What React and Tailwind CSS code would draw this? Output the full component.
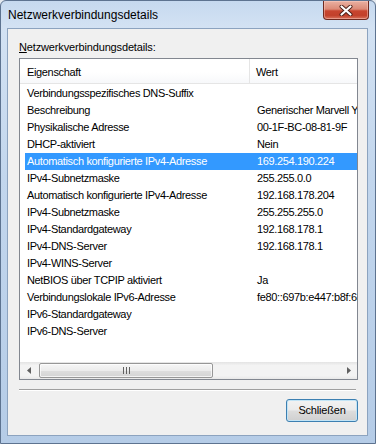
import React from "react";

const rows = [
  ["Verbindungsspezifisches DNS-Suffix", ""],
  ["Beschreibung", "Generischer Marvell Yukon 88E8056 PCI-E Gigabit Ethernet Controller"],
  ["Physikalische Adresse", "00-1F-BC-08-81-9F"],
  ["DHCP-aktiviert", "Nein"],
  ["Automatisch konfigurierte IPv4-Adresse", "169.254.190.224", true],
  ["IPv4-Subnetzmaske", "255.255.0.0"],
  ["Automatisch konfigurierte IPv4-Adresse", "192.168.178.204"],
  ["IPv4-Subnetzmaske", "255.255.255.0"],
  ["IPv4-Standardgateway", "192.168.178.1"],
  ["IPv4-DNS-Server", "192.168.178.1"],
  ["IPv4-WINS-Server", ""],
  ["NetBIOS über TCPIP aktiviert", "Ja"],
  ["Verbindungslokale IPv6-Adresse", "fe80::697b:e447:b8f:6a2c%11"],
  ["IPv6-Standardgateway", ""],
  ["IPv6-DNS-Server", ""],
];

export default function App() {
  return (
    <div
      className="w-[376px] h-[444px] bg-[#e4e9ef] overflow-hidden"
      style={{ fontFamily: '"Liberation Sans", Arial, sans-serif' }}
    >
      <div className="h-full rounded-t-[6px] border border-[#5d7390] bg-[linear-gradient(to_bottom,#c6d9ef_0%,#d3e2f3_6%,#c2d6ed_40%,#b5cce7_100%)] flex flex-col">
        {/* title bar */}
        <div className="h-[27px] flex shrink-0">
          <div className="pl-[7px] pt-[6px] text-[12px] leading-[16px] text-black">
            Netzwerkverbindungsdetails
          </div>
          <div className="ml-auto mr-[6px] w-[46px] h-[19px] rounded-b-[4px] border border-t-0 border-[#6f2a20] bg-[linear-gradient(to_bottom,#eab1a2_0%,#dc8a77_45%,#c8452f_55%,#c2412b_80%,#d9735d_100%)] shadow-[inset_0_0_0_1px_rgba(255,210,200,0.45)] flex items-center justify-center">
            <svg width="14" height="11" viewBox="0 0 14 11">
              <path d="M2.5 1.5 L11.5 9.5 M11.5 1.5 L2.5 9.5" stroke="#4a1d15" strokeWidth="4" strokeLinecap="round" fill="none" />
              <path d="M2.5 1.5 L11.5 9.5 M11.5 1.5 L2.5 9.5" stroke="#ffffff" strokeWidth="2.2" strokeLinecap="round" fill="none" />
            </svg>
          </div>
        </div>

        {/* client area */}
        <div className="flex-1 ml-[6px] mr-[7px] mb-[7px] border border-[#8ca3bf] bg-[#f0f0f0] flex flex-col pt-[11px]">
          <div className="ml-[11px] h-[15px] leading-[15px] text-[11px] tracking-[-0.15px] text-black">
            <span className="underline">N</span>etzwerkverbindungsdetails:
          </div>

          {/* list view */}
          <div className="mt-[3px] ml-[11px] w-[339px] h-[322px] border border-[#828790] bg-white flex flex-col overflow-hidden shrink-0">
            <div className="h-[25px] shrink-0 flex border-b border-[#e5e5e5] bg-[linear-gradient(to_bottom,#ffffff_0%,#ffffff_55%,#f7f8fa_100%)] text-[11px] tracking-[-0.35px] text-black">
              <div className="w-[230px] shrink-0 pl-[7px] flex items-center pt-[2px] border-r border-[#e5e5e5]">
                Eigenschaft
              </div>
              <div className="pl-[6px] flex items-center pt-[2px]">Wert</div>
            </div>
            <div className="pt-[1px] flex flex-col">
              {rows.map(([k, v, sel], i) => (
                <div
                  key={i}
                  className={
                    "ml-[5px] h-[17px] flex items-center whitespace-nowrap text-[11px] tracking-[-0.35px] " +
                    (sel ? "bg-[#3399ff] text-white" : "text-black")
                  }
                >
                  <div className="w-[225px] shrink-0 pl-[2px] overflow-hidden">{k}</div>
                  <div className="pl-[7px]">{v}</div>
                </div>
              ))}
            </div>
            <div className="flex-1" />
            {/* horizontal scrollbar */}
            <div className="h-[17px] shrink-0 flex items-center bg-[linear-gradient(to_bottom,#e3e3e3_0%,#f3f3f3_20%,#f3f3f3_80%,#e8e8e8_100%)]">
              <div className="w-[17px] h-full flex items-center justify-center">
                <svg width="4" height="7" viewBox="0 0 4 7">
                  <path d="M4 0 L0 3.5 L4 7 Z" fill="#606060" />
                </svg>
              </div>
              <div className="ml-[2px] w-[174px] h-[15px] rounded-[2px] border border-[#979797] bg-[linear-gradient(to_bottom,#f6f6f6_0%,#ececec_50%,#dedede_51%,#d4d4d4_100%)] shadow-[inset_0_0_0_1px_rgba(255,255,255,0.7)] flex items-center justify-center">
                <div className="flex gap-[2px]">
                  <div className="w-px h-[7px] bg-[#616161]" />
                  <div className="w-px h-[7px] bg-[#616161]" />
                  <div className="w-px h-[7px] bg-[#616161]" />
                </div>
              </div>
              <div className="ml-auto w-[17px] h-full flex items-center justify-center">
                <svg width="4" height="7" viewBox="0 0 4 7">
                  <path d="M0 0 L4 3.5 L0 7 Z" fill="#606060" />
                </svg>
              </div>
            </div>
          </div>

          {/* separator */}
          <div className="mt-[9px] ml-[11px] w-[337px] h-px bg-[#a0a0a0] shrink-0" />
          <div className="ml-[11px] w-[337px] h-px bg-white shrink-0" />

          {/* button */}
          <div className="mt-[8px] flex shrink-0">
            <button className="ml-auto mr-[9px] w-[72px] h-[23px] rounded-[3px] border border-[#3c7fb1] bg-[linear-gradient(to_bottom,#f2f2f2_0%,#ebebeb_48%,#dddddd_52%,#cfcfcf_100%)] shadow-[inset_0_0_0_1px_#c2e4f6] text-[11px] tracking-[-0.2px] text-black flex items-center justify-center">
              Schließen
            </button>
          </div>
        </div>
      </div>
    </div>
  );
}
